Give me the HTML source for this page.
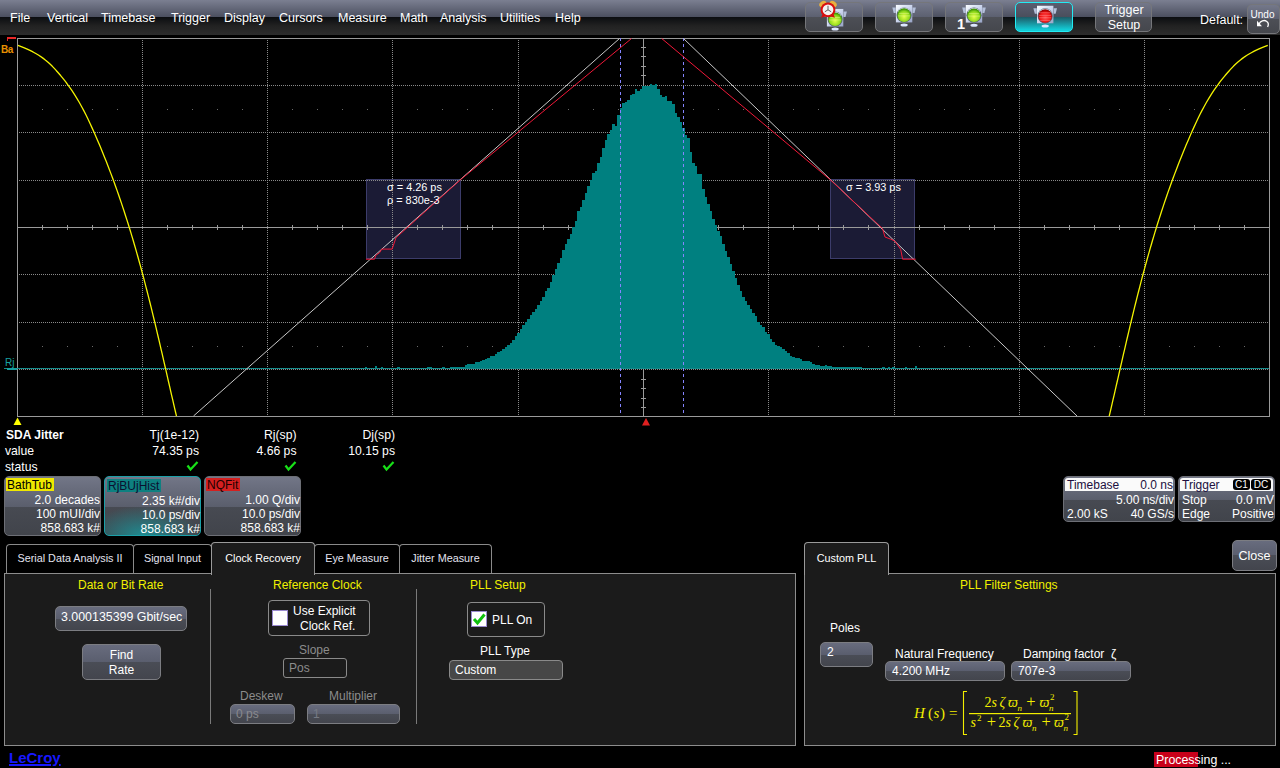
<!DOCTYPE html>
<html><head><meta charset="utf-8">
<style>
*{margin:0;padding:0;box-sizing:border-box}
html,body{width:1280px;height:768px;overflow:hidden;background:#000;font-family:"Liberation Sans",sans-serif;color:#fff}
.a{position:absolute;white-space:nowrap}
#menubar{position:absolute;left:0;top:0;width:1280px;height:35px;background:linear-gradient(#7b7f91 0px,#4b4f5f 17px,#0b0d10 17px,#222 26px,#2c2c2c 35px)}
.mi{position:absolute;top:11px;font-size:12.5px;color:#fff;line-height:14px}
.tbtn{position:absolute;top:2px;height:30px;width:58px;border:1.5px solid #75767a;border-radius:5px;background:linear-gradient(#74788a 0,#5c6070 50%,#4d4f56 50%,#45474d 100%)}
.tx{position:absolute;font-size:12.2px;line-height:14px;white-space:nowrap}
.r{text-align:right}
.tbox{position:absolute;top:476px;height:60px;width:97px;border:1.5px solid #6d6f76;border-radius:5px;background:linear-gradient(#727687 0,#5a5e6c 52%,#474a52 52%,#41444b 100%)}
.lbl{position:absolute;left:1px;top:1px;height:13px;font-size:12px;line-height:14px;color:#000;padding:0 2px 0 1px}
.ln{position:absolute;right:0px;font-size:12px;line-height:14px;color:#fff;text-align:right;white-space:nowrap}
.tab{position:absolute;top:544px;height:29px;border:1.5px solid #8a8a8a;border-bottom:none;border-radius:4px 4px 0 0;background:#000;font-size:10.8px;color:#e4e4f0;text-align:center;line-height:27px}
.panel{position:absolute;border:1.5px solid #8d8d8d;background:#1b1b1b}
.yl{position:absolute;color:#f0f000;font-size:12px;line-height:14px;white-space:nowrap}
.btn{position:absolute;border:1.5px solid #7c7d82;border-radius:5px;background:linear-gradient(#686c7e 0,#5a5e6e 50%,#4a4d56 50%,#43454d 100%);color:#fff;font-size:12px;line-height:14px;white-space:nowrap}
.sep{position:absolute;width:1px;background:#7a7a7a}
</style></head><body>
<div id="menubar"></div>
<div class="mi" style="left:10px">File</div>
<div class="mi" style="left:47px">Vertical</div>
<div class="mi" style="left:101px">Timebase</div>
<div class="mi" style="left:171px">Trigger</div>
<div class="mi" style="left:224px">Display</div>
<div class="mi" style="left:279px">Cursors</div>
<div class="mi" style="left:338px">Measure</div>
<div class="mi" style="left:400px">Math</div>
<div class="mi" style="left:440px">Analysis</div>
<div class="mi" style="left:500px">Utilities</div>
<div class="mi" style="left:555px">Help</div>

<!-- toolbar buttons -->
<div class="tbtn" style="left:805px"></div>
<div class="tbtn" style="left:875px"></div>
<div class="tbtn" style="left:945px"></div>
<div class="tbtn" style="left:1015px;border-color:#22ecf4;background:linear-gradient(#5a5e70 0,#4a4e5c 50%,#2a5a64 50%,#14c8d2 100%)"></div>
<div class="tbtn" style="left:1095px;width:57px;font-size:12.5px;text-align:center;line-height:15px;padding-top:0px;color:#fff;padding-left:1px">Trigger<br>Setup</div>
<div class="a" style="left:1200px;top:13px;font-size:12.5px;line-height:14px;color:#fff">Default:</div>
<div class="tbtn" style="left:1247px;top:4px;width:33px;height:30px;font-size:10px;text-align:center;line-height:11px;padding-top:3.5px;padding-right:2px">Undo</div><svg class="a" style="left:1255px;top:19px" width="16" height="10"><path d="M4,5 C5.5,2 9,0.6 11.5,2.2 C13.6,3.6 13.6,6 12.6,8" fill="none" stroke="#fff" stroke-width="1.3"/><path d="M2,1.8 L7,7.2 L2,7.2 Z" fill="#fff"/></svg>

<svg class="a" style="left:0;top:0" width="1280" height="36">
<defs>
<linearGradient id="frm" x1="0" y1="0" x2="1" y2="1"><stop offset="0" stop-color="#f8fcff"/><stop offset="0.5" stop-color="#ccd6ee"/><stop offset="1" stop-color="#96a2c4"/></linearGradient>
<radialGradient id="grn" cx="0.5" cy="0.62" r="0.6"><stop offset="0" stop-color="#e4ff48"/><stop offset="0.65" stop-color="#8ed81c"/><stop offset="1" stop-color="#2e8800"/></radialGradient>
<radialGradient id="red" cx="0.5" cy="0.62" r="0.6"><stop offset="0" stop-color="#ff4a4a"/><stop offset="0.65" stop-color="#ee0c0c"/><stop offset="1" stop-color="#8a0000"/></radialGradient>
<linearGradient id="glow" x1="0" y1="0" x2="0" y2="1"><stop offset="0" stop-color="#1e5a66"/><stop offset="1" stop-color="#12d4de"/></linearGradient>
<symbol id="mon" viewBox="0 0 26 26" width="26" height="26">
 <path d="M1.2,3 L4.6,3 L4.6,8.5 L2.6,8.5 Z" fill="#b4c0da"/>
 <path d="M24.8,3 L21.4,3 L21.4,8.5 L23.4,8.5 Z" fill="#b4c0da"/>
 <rect x="4.8" y="0.4" width="16.4" height="17.6" fill="url(#frm)"/>
 <ellipse cx="13" cy="20.6" rx="3.6" ry="1.5" fill="#dce6ff"/>
 <circle cx="13" cy="10.6" r="7.6" fill="#586276"/>
 <path d="M7.2,7.5 A6.6,6.6 0 0 1 18.8,7.5" fill="none" stroke="#e8eef8" stroke-width="1.2"/>
</symbol>
</defs>
<rect x="1016.5" y="17" width="55" height="13.5" rx="3" fill="url(#glow)"/>
<g transform="translate(822.1,8.5)"><use href="#mon"/><circle cx="13" cy="10.7" r="6.8" fill="url(#grn)"/><g stroke="#f0ffa0" stroke-width="0.7" opacity="0.6"><line x1="8" y1="9" x2="18" y2="9"/><line x1="7" y1="11.5" x2="19" y2="11.5"/></g></g>
<g transform="translate(891.1,4.4)"><use href="#mon"/><circle cx="13" cy="10.7" r="6.8" fill="url(#grn)"/><g stroke="#f0ffa0" stroke-width="0.7" opacity="0.6"><line x1="8" y1="9" x2="18" y2="9"/><line x1="7" y1="11.5" x2="19" y2="11.5"/></g></g>
<g transform="translate(961,4.6)"><use href="#mon"/><circle cx="13" cy="10.7" r="6.8" fill="url(#grn)"/><g stroke="#f0ffa0" stroke-width="0.7" opacity="0.6"><line x1="8" y1="9" x2="18" y2="9"/><line x1="7" y1="11.5" x2="19" y2="11.5"/></g></g>
<g transform="translate(1032.2,5.3)"><use href="#mon"/><circle cx="13" cy="10.7" r="6.8" fill="url(#red)"/><g stroke="#ffa0a0" stroke-width="0.7" opacity="0.7"><line x1="8" y1="7.5" x2="18" y2="7.5"/><line x1="7" y1="10" x2="19" y2="10"/><line x1="7" y1="12.5" x2="19" y2="12.5"/><line x1="8" y1="15" x2="18" y2="15"/></g></g>
<text x="957" y="29.3" font-family="Liberation Sans" font-weight="bold" font-size="14.5" fill="#fff">1</text>
<g transform="translate(828,9.8)">
 <ellipse cx="-5.2" cy="-5.8" rx="3.8" ry="2.8" fill="#e8b040" transform="rotate(-35 -5.2 -5.8)"/>
 <ellipse cx="5.2" cy="-5.8" rx="3.8" ry="2.8" fill="#e8b040" transform="rotate(35 5.2 -5.8)"/>
 <path d="M-5.5,4.5 L-7,8 L-2,6.5 Z M5.5,4.5 L7,8 L2,6.5 Z" fill="#d01010"/>
 <circle cx="0" cy="0" r="7.4" fill="#d81010"/>
 <circle cx="0" cy="0" r="5.4" fill="#f6f2f2"/>
 <path d="M0,0 L0,-4 M0,0 L3.2,2 M0,0 L-3.2,2" stroke="#505050" stroke-width="0.9"/>
</g>
</svg>


<svg width="1280" height="430" viewBox="0 0 1280 430" style="position:absolute;left:0;top:0" shape-rendering="crispEdges">
<rect x="366.5" y="179.5" width="94" height="79" fill="#1b1b35" stroke="#3c3c6a"/>
<rect x="830.5" y="179.5" width="84" height="79" fill="#1b1b35" stroke="#3c3c6a"/>
<g stroke="#8a8a8a" stroke-width="1" stroke-dasharray="1 1"><line x1="142.5" y1="38" x2="142.5" y2="416" /><line x1="267.5" y1="38" x2="267.5" y2="416" /><line x1="392.5" y1="38" x2="392.5" y2="416" /><line x1="518.5" y1="38" x2="518.5" y2="416" /><line x1="768.5" y1="38" x2="768.5" y2="416" /><line x1="894.5" y1="38" x2="894.5" y2="416" /><line x1="1019.5" y1="38" x2="1019.5" y2="416" /><line x1="1144.5" y1="38" x2="1144.5" y2="416" /><line x1="17" y1="85.5" x2="1269" y2="85.5" /><line x1="17" y1="132.5" x2="1269" y2="132.5" /><line x1="17" y1="180.5" x2="1269" y2="180.5" /><line x1="17" y1="274.5" x2="1269" y2="274.5" /><line x1="17" y1="322.5" x2="1269" y2="322.5" /><line x1="17" y1="369.5" x2="1269" y2="369.5" /></g>
<g fill="#6a6a6a"><rect x="42" y="109" width="1" height="1"/><rect x="67" y="109" width="1" height="1"/><rect x="92" y="109" width="1" height="1"/><rect x="117" y="109" width="1" height="1"/><rect x="167" y="109" width="1" height="1"/><rect x="192" y="109" width="1" height="1"/><rect x="217" y="109" width="1" height="1"/><rect x="242" y="109" width="1" height="1"/><rect x="292" y="109" width="1" height="1"/><rect x="317" y="109" width="1" height="1"/><rect x="342" y="109" width="1" height="1"/><rect x="367" y="109" width="1" height="1"/><rect x="417" y="109" width="1" height="1"/><rect x="442" y="109" width="1" height="1"/><rect x="467" y="109" width="1" height="1"/><rect x="492" y="109" width="1" height="1"/><rect x="543" y="109" width="1" height="1"/><rect x="568" y="109" width="1" height="1"/><rect x="593" y="109" width="1" height="1"/><rect x="618" y="109" width="1" height="1"/><rect x="668" y="109" width="1" height="1"/><rect x="693" y="109" width="1" height="1"/><rect x="718" y="109" width="1" height="1"/><rect x="743" y="109" width="1" height="1"/><rect x="793" y="109" width="1" height="1"/><rect x="818" y="109" width="1" height="1"/><rect x="843" y="109" width="1" height="1"/><rect x="868" y="109" width="1" height="1"/><rect x="919" y="109" width="1" height="1"/><rect x="944" y="109" width="1" height="1"/><rect x="969" y="109" width="1" height="1"/><rect x="994" y="109" width="1" height="1"/><rect x="1044" y="109" width="1" height="1"/><rect x="1069" y="109" width="1" height="1"/><rect x="1094" y="109" width="1" height="1"/><rect x="1119" y="109" width="1" height="1"/><rect x="1169" y="109" width="1" height="1"/><rect x="1194" y="109" width="1" height="1"/><rect x="1219" y="109" width="1" height="1"/><rect x="1244" y="109" width="1" height="1"/><rect x="42" y="346" width="1" height="1"/><rect x="67" y="346" width="1" height="1"/><rect x="92" y="346" width="1" height="1"/><rect x="117" y="346" width="1" height="1"/><rect x="167" y="346" width="1" height="1"/><rect x="192" y="346" width="1" height="1"/><rect x="217" y="346" width="1" height="1"/><rect x="242" y="346" width="1" height="1"/><rect x="292" y="346" width="1" height="1"/><rect x="317" y="346" width="1" height="1"/><rect x="342" y="346" width="1" height="1"/><rect x="367" y="346" width="1" height="1"/><rect x="417" y="346" width="1" height="1"/><rect x="442" y="346" width="1" height="1"/><rect x="467" y="346" width="1" height="1"/><rect x="492" y="346" width="1" height="1"/><rect x="543" y="346" width="1" height="1"/><rect x="568" y="346" width="1" height="1"/><rect x="593" y="346" width="1" height="1"/><rect x="618" y="346" width="1" height="1"/><rect x="668" y="346" width="1" height="1"/><rect x="693" y="346" width="1" height="1"/><rect x="718" y="346" width="1" height="1"/><rect x="743" y="346" width="1" height="1"/><rect x="793" y="346" width="1" height="1"/><rect x="818" y="346" width="1" height="1"/><rect x="843" y="346" width="1" height="1"/><rect x="868" y="346" width="1" height="1"/><rect x="919" y="346" width="1" height="1"/><rect x="944" y="346" width="1" height="1"/><rect x="969" y="346" width="1" height="1"/><rect x="994" y="346" width="1" height="1"/><rect x="1044" y="346" width="1" height="1"/><rect x="1069" y="346" width="1" height="1"/><rect x="1094" y="346" width="1" height="1"/><rect x="1119" y="346" width="1" height="1"/><rect x="1169" y="346" width="1" height="1"/><rect x="1194" y="346" width="1" height="1"/><rect x="1219" y="346" width="1" height="1"/><rect x="1244" y="346" width="1" height="1"/></g>
<path d="M17.5,38.5 H1269.5 V416.5 H17.5 Z" fill="none" stroke="#9a9a9a" stroke-width="1"/>
<line x1="18" y1="227.5" x2="1269" y2="227.5" stroke="#9a9a9a"/>
<line x1="643.5" y1="39" x2="643.5" y2="416" stroke="#9a9a9a"/>
<g stroke="#9a9a9a"><line x1="42.5" y1="225" x2="42.5" y2="230" /><line x1="67.5" y1="225" x2="67.5" y2="230" /><line x1="92.5" y1="225" x2="92.5" y2="230" /><line x1="117.5" y1="225" x2="117.5" y2="230" /><line x1="167.5" y1="225" x2="167.5" y2="230" /><line x1="192.5" y1="225" x2="192.5" y2="230" /><line x1="217.5" y1="225" x2="217.5" y2="230" /><line x1="242.5" y1="225" x2="242.5" y2="230" /><line x1="292.5" y1="225" x2="292.5" y2="230" /><line x1="317.5" y1="225" x2="317.5" y2="230" /><line x1="342.5" y1="225" x2="342.5" y2="230" /><line x1="367.5" y1="225" x2="367.5" y2="230" /><line x1="417.5" y1="225" x2="417.5" y2="230" /><line x1="442.5" y1="225" x2="442.5" y2="230" /><line x1="467.5" y1="225" x2="467.5" y2="230" /><line x1="492.5" y1="225" x2="492.5" y2="230" /><line x1="543.5" y1="225" x2="543.5" y2="230" /><line x1="568.5" y1="225" x2="568.5" y2="230" /><line x1="593.5" y1="225" x2="593.5" y2="230" /><line x1="618.5" y1="225" x2="618.5" y2="230" /><line x1="668.5" y1="225" x2="668.5" y2="230" /><line x1="693.5" y1="225" x2="693.5" y2="230" /><line x1="718.5" y1="225" x2="718.5" y2="230" /><line x1="743.5" y1="225" x2="743.5" y2="230" /><line x1="793.5" y1="225" x2="793.5" y2="230" /><line x1="818.5" y1="225" x2="818.5" y2="230" /><line x1="843.5" y1="225" x2="843.5" y2="230" /><line x1="868.5" y1="225" x2="868.5" y2="230" /><line x1="919.5" y1="225" x2="919.5" y2="230" /><line x1="944.5" y1="225" x2="944.5" y2="230" /><line x1="969.5" y1="225" x2="969.5" y2="230" /><line x1="994.5" y1="225" x2="994.5" y2="230" /><line x1="1044.5" y1="225" x2="1044.5" y2="230" /><line x1="1069.5" y1="225" x2="1069.5" y2="230" /><line x1="1094.5" y1="225" x2="1094.5" y2="230" /><line x1="1119.5" y1="225" x2="1119.5" y2="230" /><line x1="1169.5" y1="225" x2="1169.5" y2="230" /><line x1="1194.5" y1="225" x2="1194.5" y2="230" /><line x1="1219.5" y1="225" x2="1219.5" y2="230" /><line x1="1244.5" y1="225" x2="1244.5" y2="230" /><line x1="641" y1="217.5" x2="646" y2="217.5" /><line x1="641" y1="237.5" x2="646" y2="237.5" /><line x1="641" y1="208.5" x2="646" y2="208.5" /><line x1="641" y1="246.5" x2="646" y2="246.5" /><line x1="641" y1="198.5" x2="646" y2="198.5" /><line x1="641" y1="256.5" x2="646" y2="256.5" /><line x1="641" y1="189.5" x2="646" y2="189.5" /><line x1="641" y1="265.5" x2="646" y2="265.5" /><line x1="641" y1="170.5" x2="646" y2="170.5" /><line x1="641" y1="284.5" x2="646" y2="284.5" /><line x1="641" y1="160.5" x2="646" y2="160.5" /><line x1="641" y1="294.5" x2="646" y2="294.5" /><line x1="641" y1="151.5" x2="646" y2="151.5" /><line x1="641" y1="303.5" x2="646" y2="303.5" /><line x1="641" y1="141.5" x2="646" y2="141.5" /><line x1="641" y1="313.5" x2="646" y2="313.5" /><line x1="641" y1="123.5" x2="646" y2="123.5" /><line x1="641" y1="331.5" x2="646" y2="331.5" /><line x1="641" y1="113.5" x2="646" y2="113.5" /><line x1="641" y1="341.5" x2="646" y2="341.5" /><line x1="641" y1="104.5" x2="646" y2="104.5" /><line x1="641" y1="350.5" x2="646" y2="350.5" /><line x1="641" y1="94.5" x2="646" y2="94.5" /><line x1="641" y1="360.5" x2="646" y2="360.5" /><line x1="641" y1="75.5" x2="646" y2="75.5" /><line x1="641" y1="379.5" x2="646" y2="379.5" /><line x1="641" y1="66.5" x2="646" y2="66.5" /><line x1="641" y1="388.5" x2="646" y2="388.5" /><line x1="641" y1="56.5" x2="646" y2="56.5" /><line x1="641" y1="398.5" x2="646" y2="398.5" /><line x1="641" y1="47.5" x2="646" y2="47.5" /><line x1="641" y1="407.5" x2="646" y2="407.5" /></g>
<path d="M392,369 L392.0,368.0 L394.5,368.0 L394.5,368.0 L397.0,368.0 L397.0,367.0 L399.5,367.0 L399.5,368.0 L402.0,368.0 L402.0,368.0 L404.5,368.0 L404.5,368.0 L407.0,368.0 L407.0,368.0 L409.5,368.0 L409.5,368.0 L412.0,368.0 L412.0,368.0 L414.5,368.0 L414.5,368.0 L417.0,368.0 L417.0,368.0 L419.5,368.0 L419.5,368.0 L422.0,368.0 L422.0,368.0 L424.5,368.0 L424.5,368.0 L427.0,368.0 L427.0,367.0 L429.5,367.0 L429.5,367.0 L432.0,367.0 L432.0,368.0 L434.5,368.0 L434.5,368.0 L437.0,368.0 L437.0,368.0 L439.5,368.0 L439.5,368.0 L442.0,368.0 L442.0,367.0 L444.5,367.0 L444.5,368.0 L447.0,368.0 L447.0,368.0 L449.5,368.0 L449.5,367.0 L452.0,367.0 L452.0,367.0 L454.5,367.0 L454.5,367.0 L457.0,367.0 L457.0,367.0 L459.5,367.0 L459.5,367.0 L462.0,367.0 L462.0,367.0 L464.5,367.0 L464.5,365.0 L467.0,365.0 L467.0,364.0 L469.5,364.0 L469.5,364.0 L472.0,364.0 L472.0,364.0 L474.5,364.0 L474.5,362.0 L477.0,362.0 L477.0,362.0 L479.5,362.0 L479.5,361.0 L482.0,361.0 L482.0,360.0 L484.5,360.0 L484.5,359.0 L487.0,359.0 L487.0,358.0 L489.5,358.0 L489.5,356.0 L492.0,356.0 L492.0,356.0 L494.5,356.0 L494.5,354.0 L497.0,354.0 L497.0,352.0 L499.5,352.0 L499.5,351.0 L502.0,351.0 L502.0,349.0 L504.5,349.0 L504.5,347.0 L507.0,347.0 L507.0,345.0 L509.5,345.0 L509.5,343.0 L512.0,343.0 L512.0,340.0 L514.5,340.0 L514.5,336.0 L517.0,336.0 L517.0,333.0 L519.5,333.0 L519.5,329.0 L522.0,329.0 L522.0,325.0 L524.5,325.0 L524.5,322.0 L527.0,322.0 L527.0,319.0 L529.5,319.0 L529.5,315.0 L532.0,315.0 L532.0,312.0 L534.5,312.0 L534.5,309.0 L537.0,309.0 L537.0,305.0 L539.5,305.0 L539.5,301.0 L542.0,301.0 L542.0,297.0 L544.5,297.0 L544.5,291.0 L547.0,291.0 L547.0,288.0 L549.5,288.0 L549.5,282.0 L552.0,282.0 L552.0,275.0 L554.5,275.0 L554.5,269.0 L557.0,269.0 L557.0,263.0 L559.5,263.0 L559.5,258.0 L562.0,258.0 L562.0,250.0 L564.5,250.0 L564.5,244.0 L567.0,244.0 L567.0,239.0 L569.5,239.0 L569.5,234.0 L572.0,234.0 L572.0,227.0 L574.5,227.0 L574.5,221.0 L577.0,221.0 L577.0,211.0 L579.5,211.0 L579.5,207.0 L582.0,207.0 L582.0,200.0 L584.5,200.0 L584.5,193.0 L587.0,193.0 L587.0,186.0 L589.5,186.0 L589.5,180.0 L592.0,180.0 L592.0,173.0 L594.5,173.0 L594.5,171.0 L597.0,171.0 L597.0,163.0 L599.5,163.0 L599.5,157.0 L602.0,157.0 L602.0,148.0 L604.5,148.0 L604.5,140.0 L607.0,140.0 L607.0,134.0 L609.5,134.0 L609.5,130.0 L612.0,130.0 L612.0,124.0 L614.5,124.0 L614.5,126.0 L617.0,126.0 L617.0,115.0 L619.5,115.0 L619.5,108.0 L622.0,108.0 L622.0,103.0 L624.5,103.0 L624.5,102.0 L627.0,102.0 L627.0,100.0 L629.5,100.0 L629.5,95.0 L632.0,95.0 L632.0,94.0 L634.5,94.0 L634.5,89.0 L637.0,89.0 L637.0,91.0 L639.5,91.0 L639.5,89.0 L642.0,89.0 L642.0,86.0 L644.5,86.0 L644.5,86.0 L647.0,86.0 L647.0,86.0 L649.5,86.0 L649.5,84.0 L652.0,84.0 L652.0,85.0 L654.5,85.0 L654.5,84.0 L657.0,84.0 L657.0,89.0 L659.5,89.0 L659.5,95.0 L662.0,95.0 L662.0,97.0 L664.5,97.0 L664.5,96.0 L667.0,96.0 L667.0,101.0 L669.5,101.0 L669.5,101.0 L672.0,101.0 L672.0,104.0 L674.5,104.0 L674.5,113.0 L677.0,113.0 L677.0,117.0 L679.5,117.0 L679.5,122.0 L682.0,122.0 L682.0,128.0 L684.5,128.0 L684.5,135.0 L687.0,135.0 L687.0,138.0 L689.5,138.0 L689.5,152.0 L692.0,152.0 L692.0,163.0 L694.5,163.0 L694.5,166.0 L697.0,166.0 L697.0,174.0 L699.5,174.0 L699.5,174.0 L702.0,174.0 L702.0,189.0 L704.5,189.0 L704.5,197.0 L707.0,197.0 L707.0,204.0 L709.5,204.0 L709.5,211.0 L712.0,211.0 L712.0,219.0 L714.5,219.0 L714.5,225.0 L717.0,225.0 L717.0,231.0 L719.5,231.0 L719.5,236.0 L722.0,236.0 L722.0,244.0 L724.5,244.0 L724.5,251.0 L727.0,251.0 L727.0,257.0 L729.5,257.0 L729.5,264.0 L732.0,264.0 L732.0,271.0 L734.5,271.0 L734.5,278.0 L737.0,278.0 L737.0,285.0 L739.5,285.0 L739.5,291.0 L742.0,291.0 L742.0,297.0 L744.5,297.0 L744.5,301.0 L747.0,301.0 L747.0,305.0 L749.5,305.0 L749.5,309.0 L752.0,309.0 L752.0,313.0 L754.5,313.0 L754.5,316.0 L757.0,316.0 L757.0,322.0 L759.5,322.0 L759.5,325.0 L762.0,325.0 L762.0,327.0 L764.5,327.0 L764.5,332.0 L767.0,332.0 L767.0,334.0 L769.5,334.0 L769.5,339.0 L772.0,339.0 L772.0,342.0 L774.5,342.0 L774.5,345.0 L777.0,345.0 L777.0,346.0 L779.5,346.0 L779.5,347.0 L782.0,347.0 L782.0,349.0 L784.5,349.0 L784.5,351.0 L787.0,351.0 L787.0,353.0 L789.5,353.0 L789.5,356.0 L792.0,356.0 L792.0,357.0 L794.5,357.0 L794.5,358.0 L797.0,358.0 L797.0,358.0 L799.5,358.0 L799.5,359.0 L802.0,359.0 L802.0,361.0 L804.5,361.0 L804.5,361.0 L807.0,361.0 L807.0,361.0 L809.5,361.0 L809.5,362.0 L812.0,362.0 L812.0,364.0 L814.5,364.0 L814.5,365.0 L817.0,365.0 L817.0,365.0 L819.5,365.0 L819.5,366.0 L822.0,366.0 L822.0,366.0 L824.5,366.0 L824.5,365.0 L827.0,365.0 L827.0,366.0 L829.5,366.0 L829.5,366.0 L832.0,366.0 L832.0,367.0 L834.5,367.0 L834.5,367.0 L837.0,367.0 L837.0,367.0 L839.5,367.0 L839.5,367.0 L842.0,367.0 L842.0,367.0 L844.5,367.0 L844.5,367.0 L847.0,367.0 L847.0,367.0 L849.5,367.0 L849.5,367.0 L852.0,367.0 L852.0,367.0 L854.5,367.0 L854.5,367.0 L857.0,367.0 L857.0,367.0 L859.5,367.0 L859.5,367.0 L862.0,367.0 L862.0,368.0 L864.5,368.0 L864.5,368.0 L867.0,368.0 L867.0,368.0 L869.5,368.0 L869.5,368.0 L872.0,368.0 L872.0,368.0 L874.5,368.0 L874.5,368.0 L877.0,368.0 L877.0,368.0 L879.5,368.0 L879.5,368.0 L882.0,368.0 L882.0,367.0 L884.5,367.0 L884.5,368.0 L887.0,368.0 L887.0,368.0 L889.5,368.0 L889.5,368.0 L892.0,368.0 L892.0,367.0 L894.5,367.0 L894.5,368.0 L897.0,368.0 L897.0,368.0 L899.5,368.0 L899.5,368.0 L902.0,368.0 L902.0,368.0 L904.5,368.0 L904.5,367.0 L907.0,367.0 L907.0,369 Z" fill="#008080" shape-rendering="crispEdges"/>
<g fill="#008080"><rect x="365" y="367" width="2" height="2"/><rect x="375" y="366" width="2" height="3"/><rect x="381" y="367" width="2" height="2"/><rect x="888" y="367" width="2" height="2"/><rect x="915" y="366" width="2" height="3"/></g>
<line x1="4" y1="368.5" x2="1269" y2="368.5" stroke="#148c8c" stroke-width="1"/>
<g stroke="#8484ff" stroke-width="1" stroke-dasharray="3 3"><line x1="620.5" y1="38" x2="620.5" y2="416"/><line x1="683.5" y1="38" x2="683.5" y2="416"/></g>
</svg>
<svg width="1280" height="430" viewBox="0 0 1280 430" style="position:absolute;left:0;top:0">
<line x1="619.5" y1="38.5" x2="193.5" y2="416" stroke="#c8c8c8" stroke-width="1"/>
<line x1="683.5" y1="38.5" x2="1077" y2="416" stroke="#c8c8c8" stroke-width="1"/>
<polyline points="631.5,38.5 460.4,179.8 396.0,237.7 392.1,249.1 381.7,249.1 379.7,252.6 375.8,255.3 374.5,259.2 366.0,259.2" fill="none" stroke="#f01838" stroke-width="1"/>
<polyline points="661.7,38.5 830.0,179.5 882.5,228.6 885.0,237.0 890.3,239.0 894.8,241.0 900.7,249.4 902.6,259.2 915.7,259.2" fill="none" stroke="#f01838" stroke-width="1"/>
<path d="M17.90,45.30 L20.56,46.33 L23.09,47.35 L25.50,48.38 L27.78,49.40 L29.94,50.43 L31.98,51.45 L33.92,52.48 L35.76,53.51 L37.50,54.53 L39.15,55.56 L40.72,56.58 L42.20,57.61 L43.61,58.63 L44.95,59.66 L46.22,60.68 L47.44,61.71 L48.60,62.74 L49.72,63.76 L50.79,64.79 L51.82,65.81 L52.83,66.84 L53.80,67.86 L54.76,68.89 L55.70,69.92 L56.62,70.94 L57.53,71.97 L58.43,72.99 L59.31,74.02 L60.18,75.04 L61.04,76.07 L61.89,77.09 L62.72,78.12 L63.54,79.15 L64.35,80.17 L65.15,81.20 L65.93,82.22 L66.70,83.25 L67.46,84.27 L68.21,85.30 L68.58,85.80 L71.50,89.98 L74.26,94.16 L76.87,98.35 L79.34,102.53 L81.68,106.71 L83.91,110.89 L86.03,115.08 L88.08,119.26 L90.05,123.44 L91.96,127.62 L93.83,131.81 L95.67,135.99 L97.48,140.17 L99.26,144.35 L101.01,148.53 L102.73,152.72 L104.42,156.90 L106.08,161.08 L107.72,165.26 L109.33,169.45 L110.92,173.63 L112.48,177.81 L114.02,181.99 L115.53,186.17 L117.02,190.36 L118.48,194.54 L119.92,198.72 L121.34,202.90 L122.74,207.09 L124.12,211.27 L125.47,215.45 L126.81,219.63 L128.13,223.82 L129.43,228.00 L130.71,232.18 L131.97,236.36 L133.21,240.54 L134.44,244.73 L135.65,248.91 L136.84,253.09 L138.02,257.27 L139.18,261.46 L140.33,265.64 L141.47,269.82 L142.59,274.00 L143.70,278.18 L144.80,282.37 L145.88,286.55 L146.96,290.73 L148.02,294.91 L149.07,299.10 L150.12,303.28 L151.15,307.46 L152.17,311.64 L153.19,315.83 L154.20,320.01 L155.20,324.19 L156.20,328.37 L157.19,332.55 L158.17,336.74 L159.15,340.92 L160.12,345.10 L161.09,349.28 L162.06,353.47 L163.02,357.65 L163.98,361.83 L164.94,366.01 L165.90,370.19 L166.86,374.38 L167.81,378.56 L168.77,382.74 L169.73,386.92 L170.68,391.11 L171.64,395.29 L172.61,399.47 L173.57,403.65 L174.54,407.84 L175.51,412.02 L176.49,416.20" fill="none" stroke="#f4f400" stroke-width="1.3"/>
<path d="M1267.80,45.30 L1265.14,46.33 L1262.61,47.35 L1260.20,48.38 L1257.92,49.40 L1255.76,50.43 L1253.72,51.45 L1251.78,52.48 L1249.94,53.51 L1248.20,54.53 L1246.55,55.56 L1244.98,56.58 L1243.50,57.61 L1242.09,58.63 L1240.75,59.66 L1239.48,60.68 L1238.26,61.71 L1237.10,62.74 L1235.98,63.76 L1234.91,64.79 L1233.88,65.81 L1232.87,66.84 L1231.90,67.86 L1230.94,68.89 L1230.00,69.92 L1229.08,70.94 L1228.17,71.97 L1227.27,72.99 L1226.39,74.02 L1225.52,75.04 L1224.66,76.07 L1223.81,77.09 L1222.98,78.12 L1222.16,79.15 L1221.35,80.17 L1220.55,81.20 L1219.77,82.22 L1219.00,83.25 L1218.24,84.27 L1217.49,85.30 L1217.12,85.80 L1214.20,89.98 L1211.44,94.16 L1208.83,98.35 L1206.36,102.53 L1204.02,106.71 L1201.79,110.89 L1199.67,115.08 L1197.62,119.26 L1195.65,123.44 L1193.74,127.62 L1191.87,131.81 L1190.03,135.99 L1188.22,140.17 L1186.44,144.35 L1184.69,148.53 L1182.97,152.72 L1181.28,156.90 L1179.62,161.08 L1177.98,165.26 L1176.37,169.45 L1174.78,173.63 L1173.22,177.81 L1171.68,181.99 L1170.17,186.17 L1168.68,190.36 L1167.22,194.54 L1165.78,198.72 L1164.36,202.90 L1162.96,207.09 L1161.58,211.27 L1160.23,215.45 L1158.89,219.63 L1157.57,223.82 L1156.27,228.00 L1154.99,232.18 L1153.73,236.36 L1152.49,240.54 L1151.26,244.73 L1150.05,248.91 L1148.86,253.09 L1147.68,257.27 L1146.52,261.46 L1145.37,265.64 L1144.23,269.82 L1143.11,274.00 L1142.00,278.18 L1140.90,282.37 L1139.82,286.55 L1138.74,290.73 L1137.68,294.91 L1136.63,299.10 L1135.58,303.28 L1134.55,307.46 L1133.53,311.64 L1132.51,315.83 L1131.50,320.01 L1130.50,324.19 L1129.50,328.37 L1128.51,332.55 L1127.53,336.74 L1126.55,340.92 L1125.58,345.10 L1124.61,349.28 L1123.64,353.47 L1122.68,357.65 L1121.72,361.83 L1120.76,366.01 L1119.80,370.19 L1118.84,374.38 L1117.89,378.56 L1116.93,382.74 L1115.97,386.92 L1115.02,391.11 L1114.06,395.29 L1113.09,399.47 L1112.13,403.65 L1111.16,407.84 L1110.19,412.02 L1109.21,416.20" fill="none" stroke="#f4f400" stroke-width="1.3"/>
<polygon points="13.5,425 21.5,425 17.5,417.5" fill="#ffff00"/>
<polygon points="642,425.5 650,425.5 646,418" fill="#e02020"/>
<rect x="7" y="37" width="9" height="2" fill="#e82828"/><rect x="7" y="37" width="1" height="4" fill="#e82828"/>
</svg>

<!-- graph labels -->
<div class="a" style="left:1px;top:45px;font-size:10px;line-height:9px;color:#e89000;font-weight:bold;letter-spacing:-0.5px">Ba</div>
<div class="a" style="left:5px;top:358px;font-size:10px;line-height:9px;color:#18a0a0">Rj</div><div class="a" style="left:7px;top:368px;width:10px;height:2px;background:#18a0a0"></div>
<div class="a" style="left:387px;top:181px;font-size:10.9px;line-height:12.5px;color:#fff">σ = 4.26 ps<br>ρ = 830e-3</div>
<div class="a" style="left:846px;top:181px;font-size:10.9px;line-height:12.5px;color:#fff">σ = 3.93 ps</div>

<!-- SDA table -->
<div class="tx" style="left:6px;top:428px;font-weight:bold;font-size:12px">SDA Jitter</div>
<div class="tx" style="left:5px;top:444px">value</div>
<div class="tx" style="left:5px;top:460px">status</div>
<div class="tx r" style="left:99px;width:100px;top:428px">Tj(1e-12)</div>
<div class="tx r" style="left:99px;width:100px;top:444px">74.35 ps</div>
<div class="tx r" style="left:196.5px;width:100px;top:428px">Rj(sp)</div>
<div class="tx r" style="left:196.5px;width:100px;top:444px">4.66 ps</div>
<div class="tx r" style="left:295px;width:100px;top:428px">Dj(sp)</div>
<div class="tx r" style="left:295px;width:100px;top:444px">10.15 ps</div>
<svg class="a" style="left:0;top:455px" width="400" height="20">
<path d="M187.5,10.5 L190.5,14.5 L197.5,7" fill="none" stroke="#18e018" stroke-width="2.2"/>
<path d="M285.5,10.5 L288.5,14.5 L295.5,7" fill="none" stroke="#18e018" stroke-width="2.2"/>
<path d="M383.5,10.5 L386.5,14.5 L393.5,7" fill="none" stroke="#18e018" stroke-width="2.2"/>
</svg>

<!-- trace descriptor boxes -->
<div class="tbox" style="left:4px">
 <div class="lbl" style="background:#f0e800">BathTub</div>
 <div class="ln" style="top:16px">2.0 decades</div>
 <div class="ln" style="top:30px">100 mUI/div</div>
 <div class="ln" style="top:44px">858.683 k#</div>
</div>
<div class="tbox" style="left:104px;border-color:#1aa0a8;background:radial-gradient(ellipse 60% 50% at 40% 100%,#1f8a90 0,rgba(31,138,144,0) 100%),linear-gradient(#727687 0,#5a5e6c 52%,#474a52 52%,#41444b 100%)">
 <div class="lbl" style="background:#0e8080;color:#0a1030;left:2px;top:2px">RjBUjHist</div>
 <div class="ln" style="top:17px">2.35 k#/div</div>
 <div class="ln" style="top:31px">10.0 ps/div</div>
 <div class="ln" style="top:45px">858.683 k#</div>
</div>
<div class="tbox" style="left:204px">
 <div class="lbl" style="background:#d42020;color:#200000">NQFit</div>
 <div class="ln" style="top:16px">1.00 Q/div</div>
 <div class="ln" style="top:30px">10.0 ps/div</div>
 <div class="ln" style="top:44px">858.683 k#</div>
</div>

<!-- timebase/trigger -->
<div class="tbox" style="left:1063px;width:112px;height:46px">
 <div style="position:absolute;left:1px;top:1px;right:1px;height:13px;background:#fafafa;border-radius:3px 3px 0 0"></div>
 <div class="tx" style="font-size:12px;left:3px;top:1px;color:#201040">Timebase</div>
 <div class="tx r" style="font-size:12px;right:1px;top:1px;color:#201040">0.0 ns</div>
 <div class="ln" style="top:16px">5.00 ns/div</div>
 <div class="tx" style="font-size:12px;left:3px;top:30px">2.00 kS</div>
 <div class="ln" style="top:30px">40 GS/s</div>
</div>
<div class="tbox" style="left:1178px;width:97px;height:46px">
 <div style="position:absolute;left:1px;top:1px;right:1px;height:13px;background:#fafafa;border-radius:3px 3px 0 0"></div>
 <div class="tx" style="font-size:12px;left:3px;top:1px;color:#201040">Trigger</div>
 <div class="a" style="left:54px;top:2px;height:11px;width:17px;background:#000;border-radius:3px;font-size:10px;line-height:11px;color:#fff;text-align:center">C1</div>
 <div class="a" style="left:72px;top:2px;height:11px;width:20px;background:#000;border-radius:3px;font-size:10px;line-height:11px;color:#fff;text-align:center">DC</div>
 <div class="tx" style="font-size:12px;left:3px;top:16px">Stop</div>
 <div class="ln" style="top:16px">0.0 mV</div>
 <div class="tx" style="font-size:12px;left:3px;top:30px">Edge</div>
 <div class="ln" style="top:30px">Positive</div>
</div>

<!-- dialog left -->
<div class="panel" style="left:4px;top:573px;width:792px;height:173px"></div>
<div class="tab" style="left:6px;width:128px">Serial Data Analysis II</div>
<div class="tab" style="left:133px;width:79px">Signal Input</div>
<div class="tab" style="left:211px;top:542px;height:33px;width:104px;background:#1b1b1b;border-color:#9a9a9a;color:#fff;line-height:31px">Clock Recovery</div>
<div class="tab" style="left:314px;width:86px">Eye Measure</div>
<div class="tab" style="left:399px;width:93px">Jitter Measure</div>

<div class="yl" style="left:78px;top:578px">Data or Bit Rate</div>
<div class="btn" style="left:55px;top:606px;width:132px;height:25px;padding:3px 0 0 5px;font-size:12.4px">3.000135399 Gbit/sec</div>
<div class="btn" style="left:82px;top:644px;width:79px;height:36px;text-align:center;padding-top:3px;line-height:15px">Find<br>Rate</div>
<div class="sep" style="left:210px;top:589px;height:135px"></div>

<div class="yl" style="left:273px;top:578px">Reference Clock</div>
<div class="a" style="left:268px;top:600px;width:102px;height:36px;border:1.5px solid #8a8a8a;border-radius:4px"></div>
<div class="a" style="left:272px;top:610px;width:16px;height:16px;background:#fff;border:1.5px solid #9a8ad0"></div>
<div class="a" style="left:293px;top:604px;font-size:12px;line-height:15px;color:#fff;text-align:center">Use Explicit<br>&nbsp;&nbsp;Clock Ref.</div>
<div class="a" style="left:299px;top:643px;font-size:12px;line-height:14px;color:#8c8c8c">Slope</div>
<div class="a" style="left:283px;top:658px;width:64px;height:20px;border:1.5px solid #8a8a8a;border-radius:3px;background:#1b1b1b;font-size:12px;line-height:14px;color:#8c8c8c;padding:2px 0 0 5px">Pos</div>
<div class="a" style="left:240px;top:689px;font-size:12px;line-height:14px;color:#8c8c8c">Deskew</div>
<div class="a" style="left:329px;top:689px;font-size:12px;line-height:14px;color:#8c8c8c">Multiplier</div>
<div class="btn" style="left:230px;top:704px;width:65px;height:20px;color:#8a8a8e;padding:2px 0 0 5px">0 ps</div>
<div class="btn" style="left:307px;top:704px;width:93px;height:20px;color:#767a84;padding:2px 0 0 5px">1</div>
<div class="sep" style="left:416px;top:589px;height:135px"></div>

<div class="yl" style="left:470px;top:578px">PLL Setup</div>
<div class="a" style="left:467px;top:602px;width:78px;height:35px;border:1.5px solid #8a8a8a;border-radius:4px"></div>
<div class="a" style="left:471px;top:611px;width:16px;height:16px;background:#fff;border:1.5px solid #9a8ad0"></div>
<svg class="a" style="left:471px;top:611px" width="16" height="16"><path d="M3,8 L6.5,12 L13.5,3.5" fill="none" stroke="#10c010" stroke-width="3"/></svg>
<div class="a" style="left:492px;top:613px;font-size:12px;line-height:14px;color:#fff">PLL On</div>
<div class="a" style="left:480px;top:644px;font-size:12px;line-height:14px;color:#fff">PLL Type</div>
<div class="a" style="left:449px;top:660px;width:114px;height:20px;border:1.5px solid #8a8a8a;border-radius:4px;background:#474747;font-size:12px;line-height:14px;color:#fff;padding:2px 0 0 5px">Custom</div>

<!-- dialog right -->
<div class="panel" style="left:804px;top:573px;width:472px;height:173px"></div>
<div class="tab" style="left:804px;top:542px;height:33px;width:85px;background:#1b1b1b;border-color:#9a9a9a;color:#fff;line-height:31px">Custom PLL</div>
<div class="btn" style="left:1232px;top:540px;width:45px;height:31px;text-align:center;line-height:30px;font-size:12.5px">Close</div>
<div class="yl" style="left:960px;top:578px">PLL Filter Settings</div>
<div class="a" style="left:830px;top:621px;font-size:12px;line-height:14px;color:#fff">Poles</div>
<div class="btn" style="left:820px;top:642px;width:53px;height:25px;padding:2px 0 0 6px">2</div>
<div class="a" style="left:895px;top:647px;font-size:12px;line-height:14px;color:#fff">Natural Frequency</div>
<div class="btn" style="left:885px;top:661px;width:120px;height:20px;padding:2px 0 0 6px">4.200 MHz</div>
<div class="a" style="left:1023px;top:647px;font-size:12px;line-height:14px;color:#fff">Damping factor&nbsp; ζ</div>
<div class="btn" style="left:1011px;top:661px;width:120px;height:20px;padding:2px 0 0 6px">707e-3</div>

<svg class="a" style="left:905px;top:685px" width="180" height="56" font-family="Liberation Serif" fill="#f2ee00">
<text x="9" y="33" font-size="15" font-style="italic">H</text>
<text x="23" y="33" font-size="15">(</text>
<text x="28.5" y="33" font-size="15" font-style="italic">s</text>
<text x="35" y="33" font-size="15">)</text>
<text x="44" y="33" font-size="15">=</text>
<path d="M62,6.5 H58.5 V49.5 H62" fill="none" stroke="#f2ee00" stroke-width="1.1"/>
<path d="M168.5,6.5 H172 V49.5 H168.5" fill="none" stroke="#f2ee00" stroke-width="1.1"/>
<rect x="64" y="28" width="102" height="1.2"/>
<g font-size="14">
<text x="79.5" y="21.8">2</text>
<text x="86.5" y="21.8" font-style="italic">s</text>
<text x="94.5" y="21.8" font-style="italic">ζ</text>
<text x="103" y="21.8" font-style="italic">ϖ</text>
<text x="112.5" y="26" font-size="9" font-style="italic">n</text>
<text x="121.2" y="21.9" font-size="16.5">+</text>
<text x="134.5" y="21.8" font-style="italic">ϖ</text>
<text x="144" y="26" font-size="9" font-style="italic">n</text>
<text x="145" y="15" font-size="9">2</text>

<text x="65.5" y="41.5" font-style="italic">s</text>
<text x="72" y="35.5" font-size="9">2</text>
<text x="81.8" y="41.5" font-size="16.5">+</text>
<text x="93.5" y="41.5">2</text>
<text x="100.5" y="41.5" font-style="italic">s</text>
<text x="108.5" y="41.5" font-style="italic">ζ</text>
<text x="117.5" y="41.5" font-style="italic">ϖ</text>
<text x="127" y="46" font-size="9" font-style="italic">n</text>
<text x="136.6" y="41.5" font-size="16.5">+</text>
<text x="149" y="41.5" font-style="italic">ϖ</text>
<text x="158.5" y="46" font-size="9" font-style="italic">n</text>
<text x="159.5" y="35" font-size="9">2</text>
</g>
</svg>


<!-- footer -->
<div class="a" style="left:9px;top:749px;font-size:15px;line-height:17px;color:#1818ff;font-weight:bold;text-decoration:underline;text-decoration-thickness:2px">LeCroy</div>
<div class="a" style="left:1154px;top:752px;width:44px;height:15px;background:#c8001a"></div>
<div class="a" style="left:1156px;top:753px;font-size:12.4px;line-height:14px;color:#fff">Processing ...</div>
</body></html>
